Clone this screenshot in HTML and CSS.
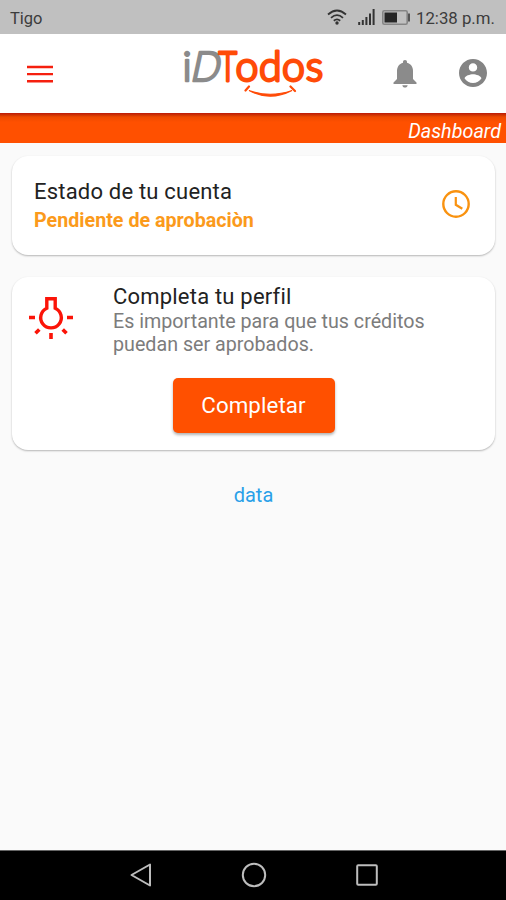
FILE: index.html
```html
<!DOCTYPE html>
<html lang="es">
<head>
    <meta charset="UTF-8">
    <meta name="viewport" content="width=device-width, initial-scale=1.0">
    <title>iDTodos</title>
    <link rel="stylesheet" href="styles.css">
</head>
<body>
<div class="status-bar">
    <span class="carrier">Tigo</span>
    <svg class="wifi" width="20" height="16" viewBox="0 0 20 16">
        <path d="M1 5.500Q10-2.500 19 5.500M4 8.800Q10 3.500 16 8.800M6.800 11.800Q10 9 13.200 11.800" fill="none" stroke="#333" stroke-width="1.800"/>
        <circle cx="10" cy="14" r="1.700" fill="#333"/>
    </svg>
    <svg class="signal" width="17" height="16" viewBox="0 0 17 16">
        <path d="M1.200 16v-3M4.800 16v-5M8.400 16V8M12 16V4.500M15.600 16V0" stroke="#333" stroke-width="2"/>
    </svg>
    <svg class="battery" width="29" height="15" viewBox="0 0 29 15">
        <rect x=".8" y=".8" width="24.400" height="13.400" rx="1.500" fill="none" stroke="#858585" stroke-width="1.600"/>
        <rect x="2.500" y="2.500" width="12.500" height="10" fill="#262626"/>
        <path d="M27 3.500v8" stroke="#555" stroke-width="2"/>
    </svg>
    <span class="clock">12:38 p.m.</span>
</div>

<header class="header">
    <button class="menu" aria-label="Menú">
        <svg width="26" height="18" viewBox="0 0 26 18">
            <path d="M0 2h26M0 9.100h26M0 16.200h26" stroke="#f5200f" stroke-width="2.400"/>
        </svg>
    </button>
    <svg class="logo" width="144" height="72" viewBox="182 36 144 72">
        <g class="logo-gray">
            <text x="182.500" y="80.500">i</text>
            <text transform="translate(189.500 80.500) skewX(-12) scale(.93 1)" x="0" y="0">D</text>
        </g>
        <g class="logo-orange">
            <text transform="translate(218.500 80.500) scale(.78 1)" x="0" y="0">T</text>
            <text x="235.500 259 282 305.800" y="80.500">odos</text>
        </g>
        <path d="M249 90.500Q270 102 292 90.500Q270 98 249 90.500Z" class="smile"/>
        <path d="M245.500 90.500l3.500-4M290.500 86.500l4.500 4.500" class="dimple"/>
    </svg>
    <button class="bell" aria-label="Notificaciones">
        <svg width="24" height="28" viewBox="0 0 24 28">
            <path d="M12 0c1.300 0 2 .9 2 2v.8c4 1 6 4.300 6 8.200v8l3.500 3.500V24H.5v-1.500L4 19v-8c0-3.900 2-7.200 6-8.200V2c0-1.100.7-2 2-2zM9.300 25.300h5.400c-.3 1.500-1.300 2.300-2.700 2.300s-2.400-.8-2.700-2.300z" fill="#8b8b8b"/>
        </svg>
    </button>
    <button class="account" aria-label="Cuenta">
        <svg width="28" height="28" viewBox="2 2 20 20">
            <path d="M12 2C6.480 2 2 6.480 2 12s4.480 10 10 10 10-4.480 10-10S17.520 2 12 2zm0 3c1.660 0 3 1.340 3 3s-1.340 3-3 3-3-1.340-3-3 1.340-3 3-3zm0 14.200c-2.500 0-4.710-1.280-6-3.220.03-1.990 4-3.080 6-3.080 1.990 0 5.970 1.090 6 3.080-1.290 1.940-3.500 3.220-6 3.220z" fill="#848484"/>
        </svg>
    </button>
</header>
<div class="title-bar"><span>Dashboard</span></div>

<main class="content">
    <section class="card status-card">
        <div class="status-text">
            <h3>Estado de tu cuenta</h3>
            <p class="pending">Pendiente de aprobaciòn</p>
        </div>
        <svg width="28" height="28" viewBox="0 0 28 28" fill="none" stroke="#f9920f">
            <circle cx="14" cy="14" r="12.700" stroke-width="2.400"/>
            <path d="M13.800 7v7.800l6.500 4" stroke-width="2.200"/>
        </svg>
    </section>

    <section class="card profile-card">
        <div class="profile-row">
            <svg width="44" height="42" viewBox="0 0 44 42" fill="none" stroke="#fb1408">
                <path d="M17.800 11.200V1.800h8.400v9.400a10.300 10.300 0 1 1-8.400 0z" stroke-width="3.400"/>
                <path d="M0 20.500h6M38 20.500h6M22 36v6M10.300 32.500l-3.800 3.800M33.700 32.500l3.800 3.800" stroke-width="3.600"/>
            </svg>
            <div class="profile-text">
                <h3>Completa tu perfil</h3>
                <p>Es importante para que tus créditos<br>puedan ser aprobados.</p>
            </div>
        </div>
        <button class="btn"><span>Completar</span></button>
    </section>

    <a class="data-link" href="#">data</a>
</main>

<nav class="nav-bar">
    <svg width="22" height="24" viewBox="0 0 22 24">
        <path d="M20 1.500v21L1.500 12z"/>
    </svg>
    <svg width="26" height="26" viewBox="0 0 26 26">
        <circle cx="13" cy="13" r="11.200"/>
    </svg>
    <svg width="22" height="22" viewBox="0 0 22 22">
        <rect x="1.200" y="1.200" width="19.600" height="19.600" rx="1"/>
    </svg>
</nav>
</body>
</html>
```

FILE: styles.css
```css
body {
    font-family: Roboto, "Liberation Sans", sans-serif;
    margin: 0;
    height: 900px;
    display: flex;
    flex-direction: column;
    background-color: #fafafa;
    overflow: hidden;
}
h3,
p {
    margin: 0;
    font-weight: 400;
}
svg {
    display: block;
    flex: none;
}
button {
    border: none;
    padding: 0;
    background: none;
    cursor: pointer;
}
span,
h3,
p,
.data-link {
    white-space: nowrap;
}
.status-bar {
    display: flex;
    align-items: center;
    flex: none;
    height: 34px;
    box-sizing: border-box;
    padding-left: 10px;
    background-color: #c0c0c0;
    color: #3c3c3c;
}
.carrier {
    flex: none;
    width: 317px;
    font-size: 16.5px;
    padding-top: 2px;
}
.signal {
    margin-left: 11px;
}
.battery {
    margin-left: 7px;
}
.clock {
    margin-left: 5px;
    padding-top: 2px;
    font-size: 16.8px;
}
.header {
    display: flex;
    align-items: flex-start;
    flex: none;
    height: 79px;
    background-color: #fff;
}
.menu {
    margin: 31px 0 0 27px;
}
.logo {
    margin: 2px 0 0 129px;
    font-family: Lato, sans-serif;
    font-size: 41px;
    font-weight: 300;
    overflow: visible;
}
.logo-gray {
    fill: #8b8b8b;
    stroke: #8b8b8b;
    stroke-width: 2.5;
    stroke-linejoin: round;
}
.logo-orange {
    fill: #ff4b08;
    stroke: #ff4b08;
    stroke-width: 2.8;
    stroke-linejoin: round;
}
.smile {
    fill: #ff4b08;
    stroke: #ff4b08;
    stroke-width: 1.2;
}
.dimple {
    fill: none;
    stroke: #ff4b08;
    stroke-width: 2.2;
    stroke-linecap: round;
}
.bell {
    margin: 26px 0 0 67px;
}
.account {
    margin: 25px 0 0 42px;
}
.title-bar {
    flex: none;
    height: 30px;
    box-sizing: border-box;
    padding: 7px 5px 0 0;
    background: linear-gradient(#bd1a08 0, #cf3302 2px, #ed4900 4px, #ff5000 9px);
    color: #fff;
    font-size: 19.8px;
    font-style: italic;
    line-height: 24px;
    text-align: right;
}
.content {
    flex: 1;
    display: flex;
    flex-direction: column;
    padding: 13px 11px 0 12px;
}
.card {
    box-sizing: border-box;
    background-color: #fff;
    border-radius: 16px;
    box-shadow: 0 1px 2px rgba(0, 0, 0, 0.28);
}
.status-card {
    display: flex;
    align-items: center;
    justify-content: space-between;
    height: 99px;
    padding: 0 25px 0 22px;
}
.status-card svg {
    margin-bottom: 3px;
}
.status-text {
    padding-top: 2px;
}
h3 {
    color: #222;
    font-size: 22px;
    line-height: 28px;
    letter-spacing: 0.2px;
}
.pending {
    color: #fb9a1b;
    font-size: 19.7px;
    font-weight: 700;
    line-height: 29px;
}
.profile-card {
    display: flex;
    flex-direction: column;
    align-items: center;
    height: 173px;
    margin-top: 22px;
    padding-top: 6px;
}
.profile-row {
    display: flex;
    align-self: stretch;
    padding-left: 17px;
}
.profile-row svg {
    margin-top: 14px;
}
.profile-text {
    margin-left: 40px;
}
.profile-text p {
    color: #7c7c7c;
    font-size: 19.7px;
    line-height: 22.5px;
}
.btn {
    width: 162px;
    height: 55px;
    box-sizing: border-box;
    margin-top: 22px;
    padding-bottom: 2px;
    border-radius: 5px;
    background-color: #ff5000;
    color: #fff;
    font-family: inherit;
    font-size: 22.3px;
    letter-spacing: 0.1px;
    box-shadow: 0 2px 3px rgba(0, 0, 0, 0.3);
}
.data-link {
    align-self: center;
    margin-top: 33px;
    color: #29a0e8;
    font-size: 20px;
    line-height: 24px;
    text-decoration: none;
}
.nav-bar {
    display: flex;
    align-items: center;
    flex: none;
    height: 50px;
    box-sizing: border-box;
    padding: 0 0 2px 130px;
    border-top: 1px solid #666;
    background-color: #000;
}
.nav-bar svg {
    fill: none;
    stroke: #bdbdbd;
    stroke-width: 2;
    stroke-linejoin: round;
}
.nav-bar svg + svg {
    margin-left: 89px;
}
```
